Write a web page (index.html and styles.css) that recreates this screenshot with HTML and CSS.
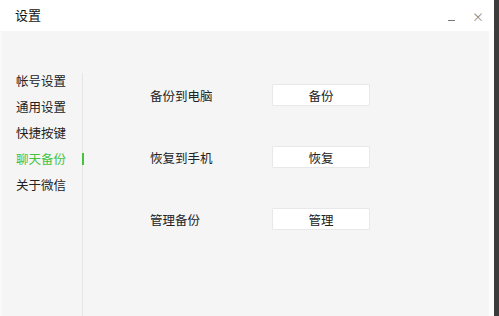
FILE: index.html
```html
<!DOCTYPE html>
<html lang="zh-CN">

<head>
    <meta charset="UTF-8">
    <meta name="viewport" content="width=device-width, initial-scale=1.0">
    <title>设置</title>
    <link rel="stylesheet" href="styles.css">
</head>

<body>
    <div class="window">
        <div class="titlebar">
            <span class="title">设置</span>
            <div class="title-buttons">
                <span class="btn-min"></span>
                <span class="btn-close">×</span>
            </div>
        </div>
        <div class="main">
            <div class="sidebar">
                <ul class="nav">
                    <li class="nav-item">帐号设置</li>
                    <li class="nav-item">通用设置</li>
                    <li class="nav-item">快捷按键</li>
                    <li class="nav-item active">聊天备份</li>
                    <li class="nav-item">关于微信</li>
                </ul>
            </div>
            <div class="content">
                <div class="row">
                    <span class="row-label">备份到电脑</span>
                    <button class="row-button">备份</button>
                </div>
                <div class="row">
                    <span class="row-label">恢复到手机</span>
                    <button class="row-button">恢复</button>
                </div>
                <div class="row">
                    <span class="row-label">管理备份</span>
                    <button class="row-button">管理</button>
                </div>
            </div>
        </div>
    </div>
</body>

</html>
```

FILE: styles.css
```css
html,
body {
    margin: 0;
    height: 100%;
}

body {
    font-family: "Noto Sans CJK SC", "Liberation Sans", sans-serif;
    background-color: #3c3c3c;
    color: #222;
    font-size: 12.5px;
}

.window {
    width: 494px;
    height: 316px;
    background: #fdfdfd;
    display: flex;
    flex-direction: column;
}

.titlebar {
    height: 31px;
    background: white;
    display: flex;
    justify-content: space-between;
    align-items: center;
    padding: 0 10px 0 15px;
}

.title {
    font-size: 13px;
    margin-top: -3px;
    color: #111;
}

.title-buttons {
    display: flex;
    align-items: center;
    gap: 17px;
    color: #888;
}

.btn-min {
    width: 7px;
    height: 1px;
    background: #777;
    margin-top: 9px;
}

.btn-close {
    font-size: 12px;
    line-height: 1;
    margin-top: 3px;
}

.main {
    flex: 1;
    display: flex;
    background-color: #f5f5f5;
    margin-right: 5px;
    border-left: 2px solid #f9f9f9;
}

.sidebar {
    margin-top: 42px;
    width: 80px;
    border-right: 1px solid #e6e6e6;
}

.nav {
    list-style: none;
    margin: -5px 0 0;
    padding: 0;
}

.nav-item {
    position: relative;
    line-height: 26px;
    padding-left: 14px;
    color: #222;
}

.nav-item.active {
    color: #46c33d;
}

.nav-item.active::after {
    content: "";
    position: absolute;
    right: -2px;
    top: 7px;
    width: 2px;
    height: 12px;
    background: #46c33d;
}

.content {
    padding: 53px 0 0 67px;
    display: flex;
    flex-direction: column;
    gap: 40px;
}

.row {
    display: flex;
    align-items: center;
    height: 22px;
}

.row-label {
    width: 122px;
    color: #222;
}

.row-button {
    width: 98px;
    height: 22px;
    background: white;
    border: 1px solid #e8e8e8;
    border-radius: 1px;
    font-family: inherit;
    font-size: 12.5px;
    color: #222;
    padding: 0;
}
```
